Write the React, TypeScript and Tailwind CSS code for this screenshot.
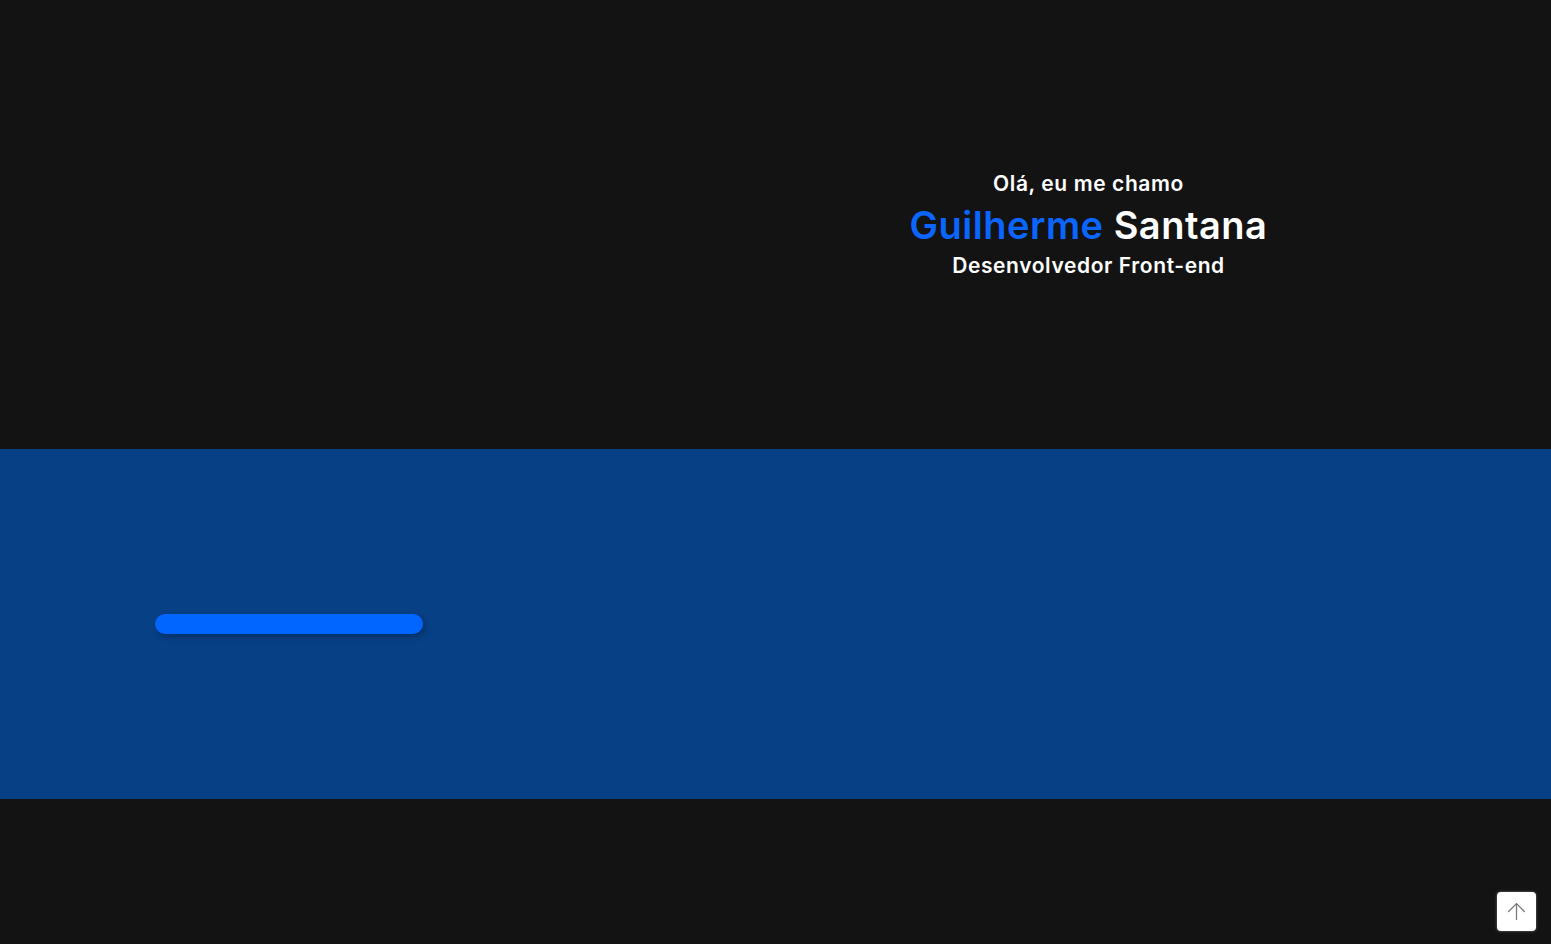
import { ArrowUp } from "lucide-react";

export default function App() {
  return (
    <div className="min-h-[944px] bg-[#131313] font-['Inter',sans-serif] text-white">
      {/* topo */}
      <section className="h-[449px]">
        <div className="mx-auto grid h-full max-w-[1280px] grid-cols-2 gap-[10px] px-[19px]">
          <div />
          <div className="flex flex-col items-center justify-center text-center">
            <p className="text-[21px] leading-[28px] font-semibold tracking-[0.6px]">Olá, eu me chamo</p>
            <h1 className="text-[38px] leading-[54px] font-semibold tracking-[0.5px]">
              <span className="text-[#0a66ff]">Guilherme</span> Santana
            </h1>
            <p className="text-[21px] leading-[28px] font-semibold tracking-[0.6px]">Desenvolvedor Front-end</p>
          </div>
        </div>
      </section>

      {/* faixa azul */}
      <section className="h-[350px] bg-[#084086]">
        <div className="mx-auto flex h-full max-w-[1280px] items-center px-[19px]">
          <div className="h-5 w-[268px] rounded-full bg-[#0066ff] shadow-[2px_3px_6px_rgba(0,0,0,0.25)]" />
        </div>
      </section>

      <section className="h-[145px]" />

      <button className="fixed right-[15px] bottom-[13px] flex h-[39px] w-[39px] items-center justify-center rounded-[4px] bg-white text-[#777] shadow-[0_0_3px_rgba(255,255,255,0.4)]">
        <ArrowUp size={27} strokeWidth={1.1} />
      </button>
    </div>
  );
}
